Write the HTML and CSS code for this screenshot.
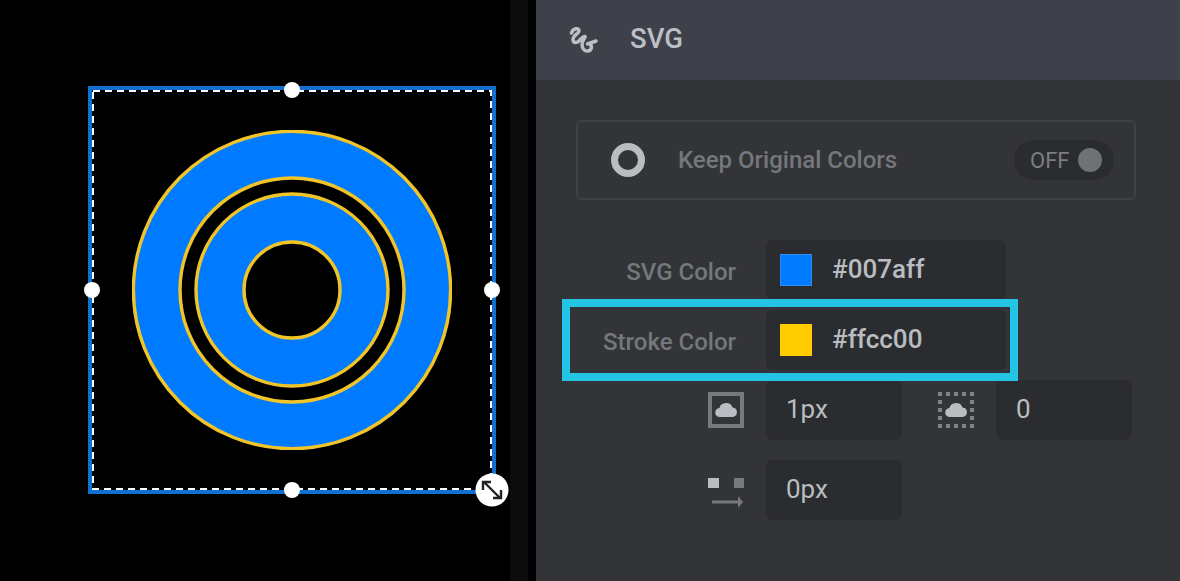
FILE: index.html
```html
<!DOCTYPE html>
<html lang="en">
<head>
<meta charset="utf-8">
<title>SVG stroke color</title>
<link rel="stylesheet" href="styles.css">
</head>
<body>
<div class="app">
  <section class="stage">
    <div class="strip"></div>
    <svg class="canvas" width="510" height="581" viewBox="0 0 510 581">
      <defs>
        <clipPath id="art"><rect x="132" y="130" width="320" height="320"/></clipPath>
      </defs>
      <g clip-path="url(#art)">
        <path fill="#007aff" stroke="#f1c527" stroke-width="3.400" fill-rule="evenodd" d="M133.400 290a158.600 158.600 0 1 0 317.200 0a158.600 158.600 0 1 0 -317.200 0zM180 290a112 112 0 1 1 224 0a112 112 0 1 1 -224 0z"/>
        <path fill="#007aff" stroke="#f1c527" stroke-width="3.400" fill-rule="evenodd" d="M196 290a96 96 0 1 0 192 0a96 96 0 1 0 -192 0zM244 290a48 48 0 1 1 96 0a48 48 0 1 1 -96 0z"/>
      </g>
      <rect x="90" y="88" width="404" height="404" fill="none" stroke="#0f70d2" stroke-width="4"/>
      <rect x="93" y="91" width="398" height="398" fill="none" stroke="#fff" stroke-width="2" stroke-dasharray="7 5"/>
      <circle cx="292" cy="90" r="8" fill="#fff"/>
      <circle cx="92" cy="290" r="8" fill="#fff"/>
      <circle cx="492" cy="290" r="8" fill="#fff"/>
      <circle cx="292" cy="490" r="8" fill="#fff"/>
      <circle cx="492" cy="490" r="16.500" fill="#fff"/>
      <path d="M484 482l16 16M483 490v-8h8M501 490v8h-8" fill="none" stroke="#222" stroke-width="2.400"/>
    </svg>
  </section>
  <section class="panel">
    <header class="panel-head">
      <svg class="squiggle" width="30" height="28" viewBox="0 0 30 28"><path d="M3.500 7C5 2 10.500 1.500 11 4.500C11.500 7.500 5 9 5 13.500C5 17.500 9 17 11 15C13 13 15.500 9.500 17 10.500C18 11.500 14 14 14 18.500C14 23 17 25.500 20 25C23.500 24.500 24.500 20 22 18C20.500 17 19.500 17.500 19.500 18L28 15" fill="none" stroke="#bcbfc5" stroke-width="3.500" stroke-linecap="round" stroke-linejoin="round"/></svg>
      <h1 class="panel-title">SVG</h1>
    </header>
    <div class="panel-body">
      <div class="keep-card">
        <svg class="ring" width="34" height="34" viewBox="0 0 34 34"><circle cx="17" cy="17" r="13.500" fill="none" stroke="#b9bcc1" stroke-width="7"/></svg>
        <span class="keep-label">Keep Original Colors</span>
        <div class="toggle"><span class="toggle-text">OFF</span><span class="toggle-knob"></span></div>
      </div>
      <div class="rows">
        <div class="row">
          <span class="row-label row-text">SVG Color</span>
          <div class="field field-wide"><span class="swatch swatch-blue"></span><span class="value value-color">#007aff</span></div>
        </div>
        <div class="row">
          <span class="row-label row-text">Stroke Color</span>
          <div class="field field-wide"><span class="swatch swatch-yellow"></span><span class="value value-color">#ffcc00</span></div>
        </div>
        <div class="row">
          <span class="row-label">
            <svg width="36" height="36" viewBox="0 0 36 36"><rect x="2" y="2" width="32" height="32" fill="none" stroke="#77797d" stroke-width="4"/><path d="M12 25a4.500 4.500 0 0 1-.6-9a7 7 0 0 1 13.200-.5a4.800 4.800 0 0 1 .4 9.500z" fill="#b9bcc1"/></svg>
          </span>
          <div class="field field-small"><span class="value">1px</span></div>
          <svg class="dotted" width="36" height="36" viewBox="0 0 36 36"><rect x="2" y="2" width="32" height="32" fill="none" stroke="#818386" stroke-width="4" stroke-dasharray="4 4" stroke-dashoffset="2"/><path d="M12 25a4.500 4.500 0 0 1-.6-9a7 7 0 0 1 13.200-.5a4.800 4.800 0 0 1 .4 9.500z" fill="#b9bcc1"/></svg>
          <div class="field field-small"><span class="value">0</span></div>
        </div>
        <div class="row">
          <span class="row-label">
            <svg width="36" height="36" viewBox="0 0 36 36"><rect x="0" y="6" width="11" height="10" fill="#b9bcc1"/><rect x="26" y="6" width="10" height="10" fill="#77797d"/><path d="M4 30h28" stroke="#77797d" stroke-width="3"/><path d="M30 24l5 6l-5 6z" fill="#77797d"/></svg>
          </span>
          <div class="field field-small"><span class="value">0px</span></div>
        </div>
      </div>
    </div>
    <div class="highlight"></div>
  </section>
</div>
</body>
</html>
```
FILE: styles.css
```css
* { box-sizing: border-box; }
html, body { margin: 0; padding: 0; height: 100%; background: #000; overflow: hidden; }
body { font-family: Roboto, "Liberation Sans", sans-serif; }
.app { display: flex; width: 1180px; height: 581px; }
.stage { position: relative; width: 536px; flex: none; background: #000; }
.strip { position: absolute; left: 510px; top: 0; width: 18px; height: 100%; background: #0c0c0c; }
.canvas { display: block; position: absolute; left: 0; top: 0; }
.panel { position: relative; flex: 1; background: #333437; display: flex; flex-direction: column; }
.panel-head { height: 80px; flex: none; background: #3e4149; display: flex; align-items: center; padding-left: 32px; }
.squiggle { display: block; flex: none; }
.panel-title { margin: -3px 0 0 32px; font-size: 27.500px; font-weight: 500; color: #bcbfc5; line-height: 1; }
.panel-body { padding: 40px 44px 0 40px; }
.keep-card { display: flex; align-items: center; width: 560px; height: 80px; border: 2px solid #404248; border-radius: 6px; padding: 0 20px 0 33px; }
.ring { display: block; flex: none; }
.keep-label { margin-left: 33px; font-size: 24px; font-weight: 500; color: #74777b; flex: 1; white-space: nowrap; line-height: 1; }
.toggle { display: flex; align-items: center; width: 100px; height: 40px; border-radius: 20px; background: #2b2c2f; padding: 0 12px 0 16px; justify-content: space-between; }
.toggle-text { font-size: 22px; color: #7b7d81; }
.toggle-knob { width: 24px; height: 24px; border-radius: 50%; background: #6f7275; }
.rows { margin-top: 40px; margin-left: -40px; display: flex; flex-direction: column; gap: 10px; }
.row { display: flex; align-items: center; height: 60px; }
.row:last-child { margin-top: 10px; }
.row-label { display: flex; justify-content: flex-end; align-items: center; width: 200px; margin-right: 30px; flex: none; white-space: nowrap; }
.row-text { font-size: 24px; font-weight: 500; color: #74777b; padding-top: 4px; }
.row-label svg, .dotted { display: block; flex: none; }
.row-label svg { margin-right: -8px; }
.dotted { margin: 0 22px 0 36px; }
.field { display: flex; align-items: center; height: 60px; background: #2b2c2f; border-radius: 6px; }
.field-wide { width: 240px; padding-left: 14px; }
.field-small { width: 136px; padding-left: 20px; }
.swatch { display: block; width: 32px; height: 32px; margin-right: 21px; flex: none; }
.swatch-blue { background: #007aff; border: 1px solid #2f8ff0; }
.swatch-yellow { background: #ffcc00; }
.value { font-size: 26px; color: #b9bcc1; margin-top: -2px; }
.value-color { font-weight: 500; margin-left: -1px; }
.highlight { position: absolute; left: 26px; top: 299px; width: 456px; height: 82px; border: 8px solid #22c5e5; pointer-events: none; }
```
